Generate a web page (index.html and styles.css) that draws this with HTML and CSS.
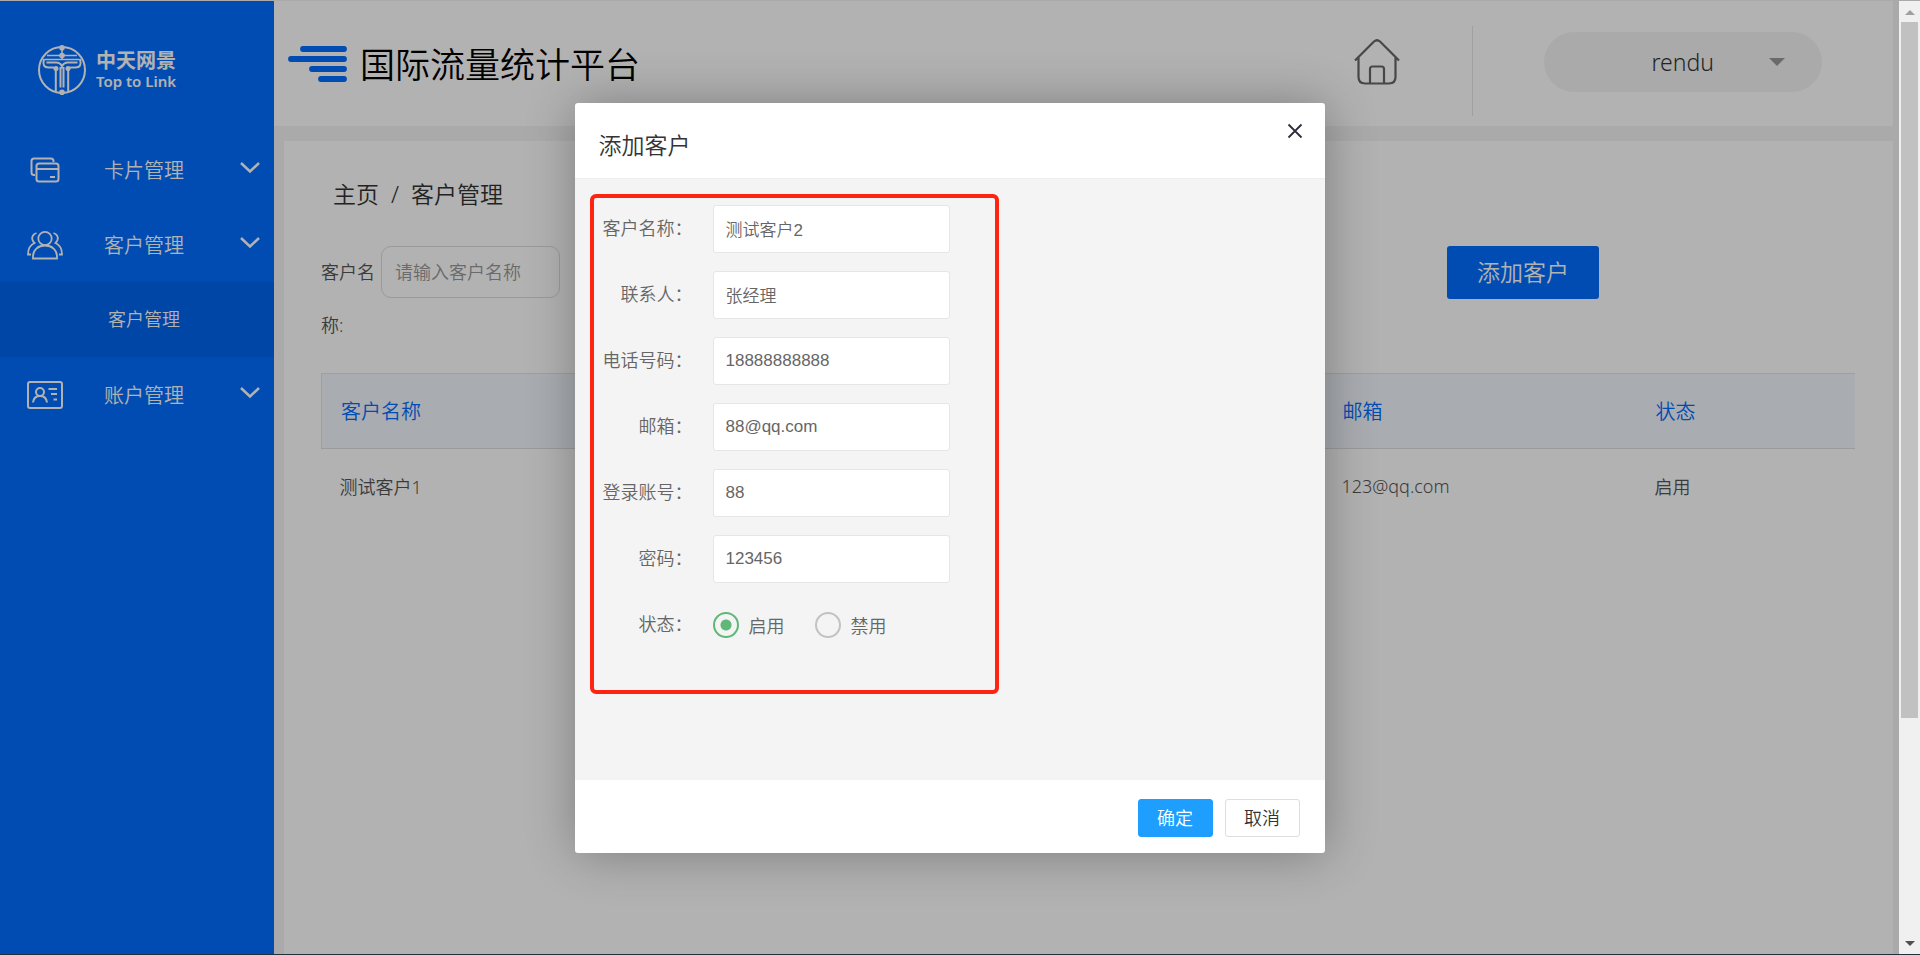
FILE: index.html
```html
<!DOCTYPE html>
<html lang="zh-CN">
<head>
<meta charset="utf-8">
<title>国际流量统计平台</title>
<link rel="stylesheet" href="styles.css">
</head>
<body>
<div class="app">
  <aside class="sidebar">
    <div class="brand">
      <svg class="brand-mark" viewBox="0 0 50 50" fill="none" stroke="#fff" stroke-width="2">
        <circle cx="25" cy="25" r="23"/>
        <path d="M25 2v12M10 10.500h30" stroke-width="1.600"/>
        <path d="M7.500 14.500h35" stroke-width="1.400"/>
        <path d="M7 14c-1.500 6 0 8.500 4.500 8.500H16c2 0 2.800 1 2.800 3V46M43 14c1.500 6 0 8.500-4.500 8.500H34c-2 0-2.800 1-2.800 3V46"/>
        <path d="M9.500 17.500H19c3 0 5 1.500 6 4 1-2.500 3-4 6-4h9.500M23.500 22v20.500M26.500 22v20.500" stroke-width="2"/>
        <g fill="#fff" stroke="none"><circle cx="25" cy="2.800" r="2.800"/><circle cx="25" cy="10.500" r="2.800"/><circle cx="19" cy="23.500" r="2.500"/><circle cx="31" cy="23.500" r="2.500"/><circle cx="25" cy="47.200" r="2.800"/></g>
      </svg>
      <div class="brand-name"><strong>中天网景</strong><span>Top to Link</span></div>
    </div>
    <nav class="menu">
      <a class="menu-item" href="#">
        <svg class="menu-icon" viewBox="0 0 36 30" fill="none" stroke="#fff" stroke-width="2">
          <path d="M8 20H7q-2.500 0-2.500-2.500V6q0-2.500 2.500-2.500h17q2.500 0 2.500 2.500v1"/>
          <rect x="9.500" y="8.500" width="22" height="18" rx="2.500"/>
          <path d="M9.500 14h22M23 22h5"/>
        </svg>
        <span>卡片管理</span>
        <svg class="chevron" viewBox="0 0 20 12" fill="none" stroke="#fff" stroke-width="2.500"><path d="M1 1l9 8.500L19 1"/></svg>
      </a>
      <a class="menu-item" href="#">
        <svg class="menu-icon" viewBox="0 0 36 30" fill="none" stroke="#fff" stroke-width="1.800">
          <circle cx="18" cy="8.500" r="6.700"/>
          <path d="M6 28.500v-2c0-6.500 5-11 12-11s12 4.500 12 11v2z"/>
          <path d="M9.500 3C6 4 4.500 7 5.500 10c.5 1.500 1 2 2 3C3 15 1 18 1 24.500h3M26.500 3c3.500 1 5 4 4 7-.5 1.500-1 2-2 3 4.500 2 6.500 5 6.500 11.500h-3"/>
        </svg>
        <span>客户管理</span>
        <svg class="chevron" viewBox="0 0 20 12" fill="none" stroke="#fff" stroke-width="2.500"><path d="M1 1l9 8.500L19 1"/></svg>
      </a>
      <a class="menu-sub" href="#">客户管理</a>
      <a class="menu-item" href="#">
        <svg class="menu-icon" viewBox="0 0 36 30" fill="none" stroke="#fff" stroke-width="2">
          <rect x="1" y="2" width="34" height="26" rx="2"/>
          <circle cx="13" cy="12" r="4"/>
          <path d="M6 22.500c.5-4 3-6.500 7-6.500s6.500 2.500 7 6.500M21.500 9H30M24 14h6M26.500 19.500H30"/>
        </svg>
        <span>账户管理</span>
        <svg class="chevron" viewBox="0 0 20 12" fill="none" stroke="#fff" stroke-width="2.500"><path d="M1 1l9 8.500L19 1"/></svg>
      </a>
    </nav>
  </aside>

  <main class="main">
    <header class="topbar">
      <svg class="bars" viewBox="0 0 59 36" stroke="#006dff" stroke-width="5.800" stroke-linecap="round"><path d="M15 3h41M3 13h53M24 23h32M33 33h23"/></svg>
      <h1>国际流量统计平台</h1>
      <a class="home" href="#" aria-label="主页">
        <svg viewBox="0 0 46 46" fill="none" stroke="#666" stroke-width="2.200">
          <path d="M1 21.500L20 2.500q3-2.500 6 0l19 19M4.500 18v20q0 6.500 6.500 6.500h24q6.500 0 6.500-6.500V18M16 44.500V30q0-2.500 2.500-2.500h9q2.500 0 2.500 2.500v14.500"/>
        </svg>
      </a>
      <div class="user-area"><button class="user" type="button"><span>rendu</span><i class="caret"></i></button></div>
    </header>
    <section class="panel">
      <div class="crumbs"><a href="#">主页</a><span>/</span><a href="#">客户管理</a></div>
      <div class="search">
        <label for="query">客户名称:</label>
        <input id="query" type="text" placeholder="请输入客户名称">
        <button class="add" type="button">添加客户</button>
      </div>
      <table class="customers">
        <thead><tr><th class="col-name">客户名称</th><th class="col-mail">邮箱</th><th>状态</th></tr></thead>
        <tbody><tr><td>测试客户1</td><td>123@qq.com</td><td>启用</td></tr></tbody>
      </table>
    </section>
  </main>

  <div class="shade">
    <div class="dialog" role="dialog" aria-labelledby="dialog-title">
      <div class="dialog-head">
        <h2 id="dialog-title">添加客户</h2>
        <button class="close" type="button" aria-label="关闭"><svg viewBox="0 0 16 16" stroke="#2e2d3c" stroke-width="1.800"><path d="M1.500 1.500l13 13M14.500 1.500l-13 13"/></svg></button>
      </div>
      <div class="dialog-body">
        <form class="form">
          <div class="field"><label for="f1">客户名称：</label><input id="f1" type="text" value="测试客户2"></div>
          <div class="field"><label for="f2">联系人：</label><input id="f2" type="text" value="张经理"></div>
          <div class="field"><label for="f3">电话号码：</label><input id="f3" type="text" value="18888888888"></div>
          <div class="field"><label for="f4">邮箱：</label><input id="f4" type="text" value="88@qq.com"></div>
          <div class="field"><label for="f5">登录账号：</label><input id="f5" type="text" value="88"></div>
          <div class="field"><label for="f6">密码：</label><input id="f6" type="text" value="123456"></div>
          <div class="field" role="radiogroup" aria-labelledby="state-label">
            <span class="field-label" id="state-label">状态：</span>
            <div class="radios">
              <label><input type="radio" name="state" checked>启用</label>
              <label><input type="radio" name="state">禁用</label>
            </div>
          </div>
        </form>
      </div>
      <div class="dialog-foot">
        <button class="btn primary" type="button">确定</button>
        <button class="btn" type="button">取消</button>
      </div>
    </div>
  </div>
</div>
<div class="scrollbar"><i class="arrow up"></i><div class="thumb"></div><i class="arrow down"></i></div>
</body>
</html>
```
FILE: styles.css
```css
* { box-sizing: border-box; }
body {
  margin: 0;
  min-height: 100vh;
  display: grid;
  grid-template-columns: 1fr 21px;
  border-top: 1px solid #aaa;
  border-bottom: 1px solid #22303c;
  font: 350 18px "Noto Sans", "Noto Sans CJK SC", sans-serif;
  color: #555;
}
button, input { font: inherit; color: inherit; margin: 0; }
a { color: inherit; text-decoration: none; }
h1, h2 { margin: 0; font-weight: 350; }
svg { display: block; }

.app { position: relative; display: flex; background: #f4f4f4; }

/* sidebar */
.sidebar { flex: 0 0 274px; background: #006dff; color: #fff; }
.brand { display: flex; align-items: center; gap: 9px; height: 131px; padding: 7px 0 0 37px; }
.brand-mark { width: 50px; height: 50px; }
.brand-name { display: flex; flex-direction: column; }
.brand-name strong { font-size: 20px; line-height: 22px; font-weight: 700; }
.brand-name span { font-size: 15px; line-height: 18px; font-weight: 600; }
.menu-item { display: flex; align-items: center; height: 75px; padding: 0 14px 0 27px; font-size: 20px; }
.menu-icon { width: 36px; height: 30px; margin-right: 41px; }
.chevron { width: 20px; height: 12px; margin: 0 0 4px auto; }
.menu-sub { display: flex; align-items: center; height: 75px; padding: 0 0 3px 108px; background: #0065ee; }

/* main area */
.main { flex: 1; display: flex; flex-direction: column; padding-right: 6px; }
.topbar { display: flex; align-items: center; height: 125px; padding-left: 14px; background: #fff; }
.bars { width: 59px; height: 36px; }
.topbar h1 { margin: 2px 0 0 13px; font-size: 35px; line-height: 50px; color: #000; }
.home { margin: 0 0 4px auto; }
.home svg { width: 46px; height: 46px; }
.user-area { display: flex; align-items: center; height: 90px; margin: 14px 0 0 72px; padding: 0 71px; border-left: 1px solid #e6e6e6; }
.user { display: flex; align-items: center; justify-content: flex-end; gap: 55px; width: 278px; height: 60px; margin-bottom: 18px; padding: 0 37px; border: 0; border-radius: 30px; background: #f4f4f4; font-size: 23px; color: #333; }
.caret { border: 8px solid transparent; border-top-color: #999; border-bottom: 0; }
.panel { flex: 1; margin: 15px 0 0 10px; padding: 31px 38px 0 37px; background: #fff; }
.crumbs { display: flex; gap: 12px; padding-left: 12px; font-size: 23px; line-height: 44px; color: #333; }
.search { display: flex; align-items: flex-start; margin-top: 30px; }
.search label { width: 60px; line-height: 53px; }
.search input { width: 179px; height: 52px; padding: 0 13px; border: 1px solid #ddd; border-radius: 10px; background: #fff; }
.search input::placeholder { color: #999; }
.add { width: 152px; height: 53px; margin: 0 256px 0 auto; padding: 0 0 3px; border: 0; border-radius: 3px; background: #006dff; color: #fff; font-size: 23px; }
.customers { width: 100%; margin-top: 21px; border-collapse: collapse; table-layout: fixed; text-align: left; }
.customers th { height: 75px; padding: 0 19px 2px; background: #f3f6fc; border-top: 1px solid #e0e4ec; border-bottom: 1px solid #ddd; color: #006dff; font-size: 20px; font-weight: 350; }
.customers th:first-child { border-left: 1px solid #e0e4ec; }
.customers td { height: 76px; padding: 0 18px 2px; }
.col-name { width: 1002px; }
.col-mail { width: 313px; }

/* dialog */
.shade { position: absolute; inset: 0; display: flex; align-items: center; justify-content: center; background: rgba(0, 0, 0, .3); }
.dialog { width: 750px; border-radius: 3px; background: #fff; box-shadow: 1px 1px 50px rgba(0, 0, 0, .3); }
.dialog-head { display: flex; justify-content: space-between; align-items: center; height: 76px; padding: 0 22px 0 24px; border-bottom: 1px solid #eee; color: #333; }
.dialog-head h2 { margin-top: 10px; font-size: 23px; line-height: 32px; }
.close { align-self: flex-start; margin-top: 20px; padding: 0; border: 0; background: none; }
.close svg { width: 16px; height: 16px; }
.dialog-body { min-height: 601px; padding: 15px; background: #f4f4f4; }
.form { display: flex; flex-direction: column; gap: 18px; width: 409px; min-height: 500px; padding: 7px 6px; border: 4px solid #ff2312; border-radius: 6px; color: #666; }
.field { display: flex; align-items: center; height: 48px; }
.field > label, .field-label { width: 93px; margin-right: 20px; padding-bottom: 3px; text-align: right; white-space: nowrap; }
.field > input { width: 237px; height: 48px; padding: 0 12px; border: 1px solid #e6e6e6; border-radius: 3px; background: #fff; font: 350 17px "Liberation Sans", "Noto Sans CJK SC", sans-serif; }
.radios { display: flex; gap: 30px; }
.radios label { display: flex; align-items: center; gap: 10px; }
.radios input { appearance: none; width: 26px; height: 26px; border: 2px solid #c2c2c2; border-radius: 50%; }
.radios input:checked { border-color: #5fb878; background: radial-gradient(circle, #5fb878 5px, transparent 6px); }
.dialog-foot { display: flex; justify-content: flex-end; align-items: center; gap: 12px; height: 73px; padding: 3px 25px 0; }
.btn { width: 75px; height: 38px; padding: 0 0 1px; border: 1px solid #dedede; border-radius: 3px; background: #fff; color: #333; }
.primary { border-color: #1e9fff; background: #1e9fff; color: #fff; }

/* window scrollbar */
.scrollbar { display: flex; flex-direction: column; align-items: center; background: #f0f0f0; }
.thumb { width: 17px; height: 73%; margin-top: 7px; background: #c1c1c1; }
.arrow { border: 5px solid transparent; }
.up { margin-top: 9px; border-top: 0; border-bottom-color: #a0a0a0; }
.down { margin: auto 0 8px; border-bottom: 0; border-top-color: #505050; }
```
